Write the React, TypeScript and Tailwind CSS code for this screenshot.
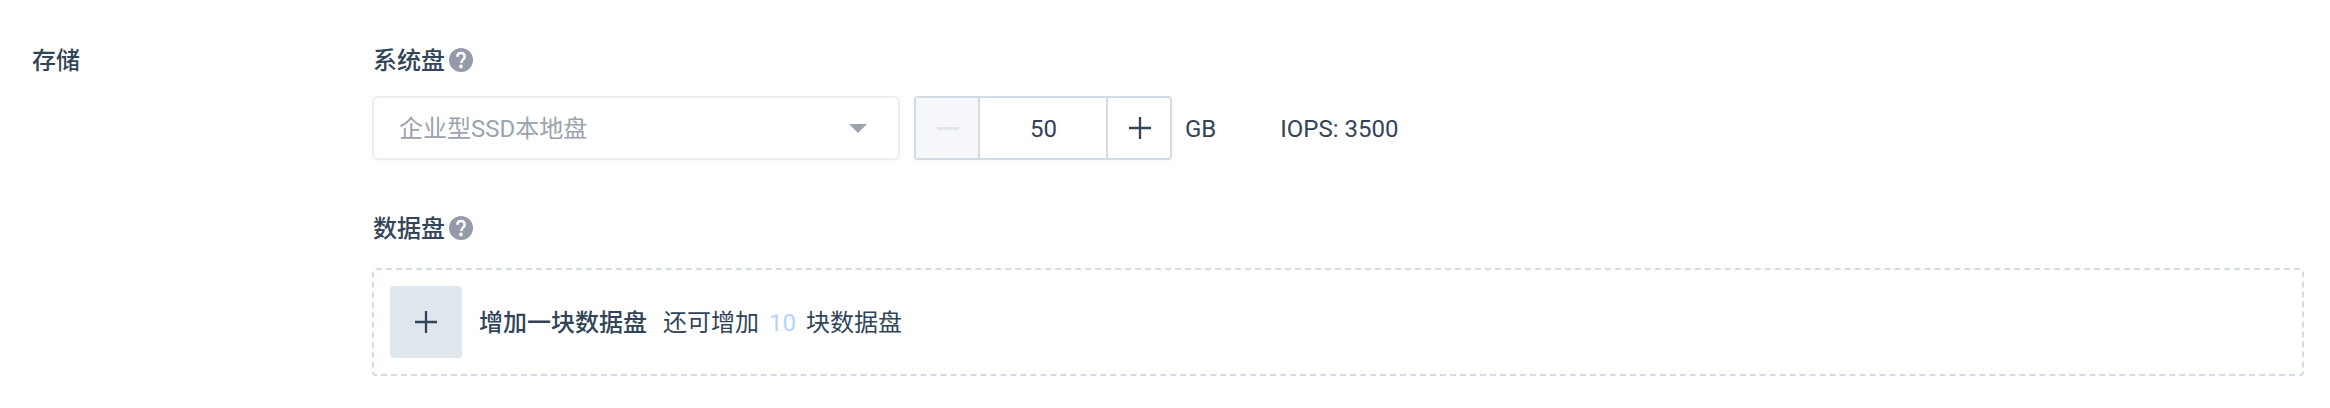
function HelpIcon() {
  return (
    <svg viewBox="0 0 24 24" className="ml-1 size-6 shrink-0">
      <circle cx="12" cy="12" r="12" fill="#959aaa" />
      <path
        d="M8.4 8.8C8.4 6.4 9.9 5.1 12 5.1C14.2 5.1 15.7 6.5 15.7 8.4C15.7 10 14.9 10.8 14 11.7C12.9 12.7 12.4 13.2 12.4 15"
        fill="none"
        stroke="#fff"
        strokeWidth="2.5"
      />
      <circle cx="12" cy="18.4" r="1.9" fill="#fff" />
    </svg>
  );
}

function Plus() {
  return (
    <svg viewBox="0 0 22 22" className="size-[22px]" fill="none" stroke="#324558" strokeWidth="2.3">
      <path d="M0 11H22M11 0V22" />
    </svg>
  );
}

export default function App() {
  return (
    <div className="flex h-[408px] w-[2330px] bg-white pl-8 font-[Roboto,'Noto_Sans_CJK_SC',sans-serif] text-2xl leading-9 text-[#324558]">
      <div className="w-[340px] shrink-0 pt-[43px] font-medium">存储</div>
      <div className="w-[1932px] pt-[42px]">
        <div className="flex h-9 items-center pl-px font-medium">
          <span className="pt-px">系统盘</span>
          <HelpIcon />
        </div>
        <div className="mt-[18px] flex items-center">
          <div className="flex h-16 w-[528px] items-center justify-between rounded-md border-2 border-[#e9eef4] pr-[31px] pl-[25px] text-[#9ba3af] shadow-[0_2px_4px_rgba(50,69,88,0.04)]">
            <span className="pt-px font-normal">企业型SSD本地盘</span>
            <svg viewBox="0 0 18 9" className="h-[9px] w-[18px]" fill="#9ba3ae">
              <path d="M0 0H18L9 9Z" />
            </svg>
          </div>
          <div className="ml-[14px] flex h-16 w-[258px] rounded-[4px] border-2 border-[#d3dce6] shadow-[0_2px_4px_rgba(50,69,88,0.04)]">
            <div className="flex w-16 items-center justify-center border-r-2 border-[#d3dce6] bg-[#f5f7fa] pl-0.5">
              <svg viewBox="0 0 22 3" className="h-[3px] w-[22px]" fill="#e0e5eb">
                <path d="M0 0H22V3H0Z" />
              </svg>
            </div>
            <div className="flex flex-1 items-center justify-center pt-px pl-px text-[#323f59]">50</div>
            <div className="flex w-16 items-center justify-center border-l-2 border-[#d3dce6] pl-0.5">
              <Plus />
            </div>
          </div>
          <span className="ml-[13px] pt-px">GB</span>
          <span className="ml-16 pt-px">IOPS: 3500</span>
        </div>
        <div className="mt-[50px] flex h-9 items-center pl-px font-medium">
          <span className="pt-px">数据盘</span>
          <HelpIcon />
        </div>
        <div className="mt-[22px] flex h-[108px] items-center rounded-[4px] border-2 border-dashed border-[#d3dce6] pl-4">
          <div className="flex size-[72px] items-center justify-center rounded-[4px] bg-[#dfe6ec]">
            <Plus />
          </div>
          <span className="ml-[17px] pt-px font-medium">增加一块数据盘</span>
          <span className="ml-4 pt-px font-normal">还可增加</span>
          <span className="mx-2.5 pt-px text-[#b3d4ff]">10</span>
          <span className="pt-px font-normal">块数据盘</span>
        </div>
      </div>
    </div>
  );
}
